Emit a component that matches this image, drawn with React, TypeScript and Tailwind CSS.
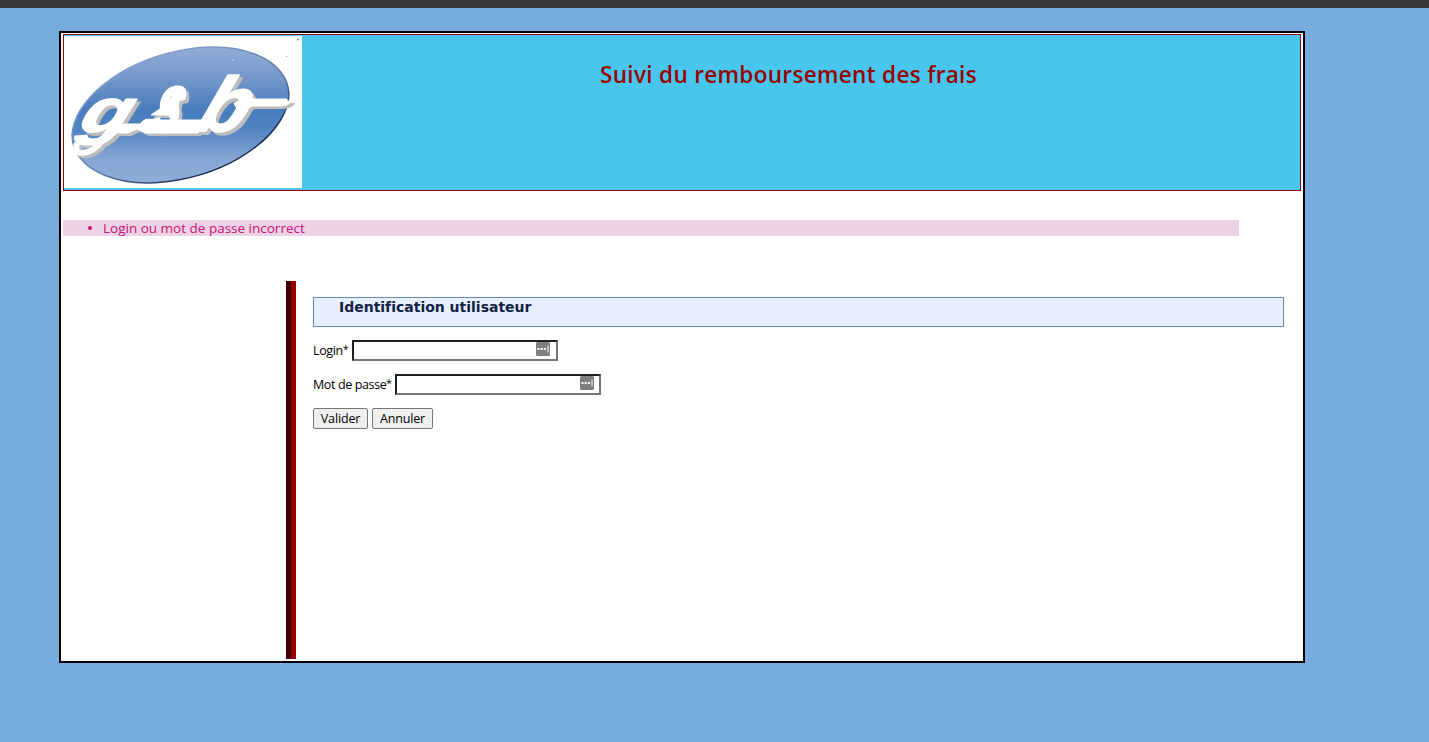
import React from "react";

function GsbLogo() {
  return (
    <svg
      className="block h-[152px] w-[238px] bg-white"
      viewBox="64 36 238 152"
      role="img"
      aria-label="gsb"
    >
      <defs>
        <linearGradient id="disc" gradientUnits="userSpaceOnUse" x1="0" y1="46" x2="0" y2="184">
          <stop offset="0" stopColor="#94add6" />
          <stop offset="0.22" stopColor="#7799cc" />
          <stop offset="0.46" stopColor="#477dbd" />
          <stop offset="0.6" stopColor="#5183c1" />
          <stop offset="0.82" stopColor="#86a6d4" />
          <stop offset="1" stopColor="#8eacd6" />
        </linearGradient>
        <linearGradient id="rim" gradientUnits="userSpaceOnUse" x1="150" y1="60" x2="210" y2="170">
          <stop offset="0" stopColor="#7f9fc9" />
          <stop offset="0.6" stopColor="#5f7fae" />
          <stop offset="1" stopColor="#152c52" />
        </linearGradient>
        <g id="word">
          <g
            fontFamily="'Liberation Sans', Arial, sans-serif"
            fontWeight="700"
            fontStyle="italic"
            strokeLinejoin="round"
          >
            <text transform="translate(77 132) skewX(-20) scale(1.3 1)" fontSize="62" strokeWidth="1.5">g</text>
            <text transform="translate(149 131) skewX(-16) scale(0.62 1)" fontSize="82" strokeWidth="3">s</text>
            <text transform="translate(194 131) skewX(-21) scale(1.02 1)" fontSize="77" strokeWidth="2">b</text>
          </g>
          <path d="M77 143Q74 153 82 153Q93 153 103 140" fill="none" strokeWidth="6" />
          <path d="M113 124H140Q145 117 154 120H204L198 133H146L137 129L128 133H108Z" />
          <path d="M151 115L164 106L182 86L178 108L170 115Z" />
          <path d="M234 103Q242 99 250 99H287L287 101H292Q288 106 280 106H252Q246 109 240 115Z" />
        </g>
      </defs>
      <path
        d="M72 135.7A111.5 64.1 -16.3 0 1 289 94.3A111.5 64.1 -16.3 0 1 72 135.7Z"
        fill="url(#disc)"
        stroke="url(#rim)"
        strokeWidth="1.5"
      />
      <use href="#word" x="3" y="2.5" fill="#bdbdbd" stroke="#bdbdbd" />
      <use href="#word" fill="#fff" stroke="#fff" />
      <circle cx="298" cy="39.5" r="1" fill="#888" />
      <circle cx="286.500" cy="56.500" r="0.600" fill="#888" />
      <circle cx="233" cy="60" r="1" fill="#a9c3e4" />
    </svg>
  );
}

function PasswordHelper() {
  return (
    <svg className="block h-[14px] w-[14px]" viewBox="0 0 14 14" aria-hidden="true">
      <rect width="14" height="14" rx="1.5" fill="#7f7f7f" />
      <path d="M1.500 6h2v2h-2zM4.700 6h2v2h-2zM7.900 6h2v2h-2z" fill="#fff" />
      <path d="M12 3.500v7" stroke="#fff" strokeWidth="1" />
    </svg>
  );
}

function Field({ label, labelClass, iconClass }: { label: string; labelClass: string; iconClass: string }) {
  return (
    <div className="flex h-[21px]">
      <label className={`whitespace-nowrap pt-[3px] text-[12.5px] leading-[16px] text-black ${labelClass}`}>
        {label}
        <span className="align-[2px] text-[10px] leading-none">*</span>
      </label>
      <div
        className={`flex h-[21px] w-[206px] justify-end border-2 border-t-[#1f1f1f] border-r-[#767676] border-b-[#767676] border-l-[#1f1f1f] bg-white ${iconClass}`}
      >
        <PasswordHelper />
      </div>
    </div>
  );
}

export default function App() {
  return (
    <div className="h-[742px] w-[1429px] overflow-hidden bg-[#77aadd] font-['Open_Sans','Noto_Sans',sans-serif]">
      <div className="h-2 bg-[#393939]" />
      <main className="mt-[23px] ml-[59px] h-[632px] w-[1246px] border-2 border-black bg-white px-[2px] pt-px">
        <header className="flex h-[157px] w-[1238px] border border-[#990000] bg-[#48c6ee] pt-px">
          <GsbLogo />
          <h1 className="ml-[298px] pt-[23px] text-[22.5px] leading-[32px] font-semibold tracking-[0.33px] whitespace-nowrap text-[#990000]">
            Suivi du remboursement des frais
          </h1>
        </header>

        <ul className="mt-[29px] flex h-4 w-[1176px] items-center bg-[#edd1e5] pl-[25px] text-[13.5px] leading-4 text-[#cc1177]">
          <li className="flex items-center whitespace-nowrap">
            <span className="mr-[11px] h-1 w-1 rounded-full bg-[#cc1177]" />
            <span>Login ou mot de passe incorrect</span>
          </li>
        </ul>

        <section className="mt-[45px] ml-[223px] flex h-[378px]">
          <div className="w-[5px] bg-[#400000]" />
          <div className="w-[5px] bg-[#990000]" />
          <div className="ml-[17px] pt-4">
            <h2 className="h-[30px] w-[971px] border border-[#6688bb] bg-[#e8f0ff] pl-[25px] font-['DejaVu_Sans',Verdana,sans-serif] text-[14px] leading-[18px] font-bold tracking-[-0.01px] text-[#122244]">
              Identification utilisateur
            </h2>
            <form className="mt-[13px]">
              <Field label="Login" labelClass="w-[39px] tracking-[-0.35px]" iconClass="pr-[6px]" />
              <div className="mt-[13px]">
                <Field label="Mot de passe" labelClass="w-[82px] tracking-[-0.38px]" iconClass="pr-[5px]" />
              </div>
              <div className="mt-[13px] flex gap-1 text-[12.5px] leading-[18px] tracking-[-0.15px] text-black">
                <button type="button" className="h-[21px] w-[55px] rounded-[2px] border border-[#767676] bg-[#efefef]">
                  Valider
                </button>
                <button type="button" className="h-[21px] w-[61px] rounded-[2px] border border-[#767676] bg-[#efefef]">
                  Annuler
                </button>
              </div>
            </form>
          </div>
        </section>
      </main>
    </div>
  );
}
